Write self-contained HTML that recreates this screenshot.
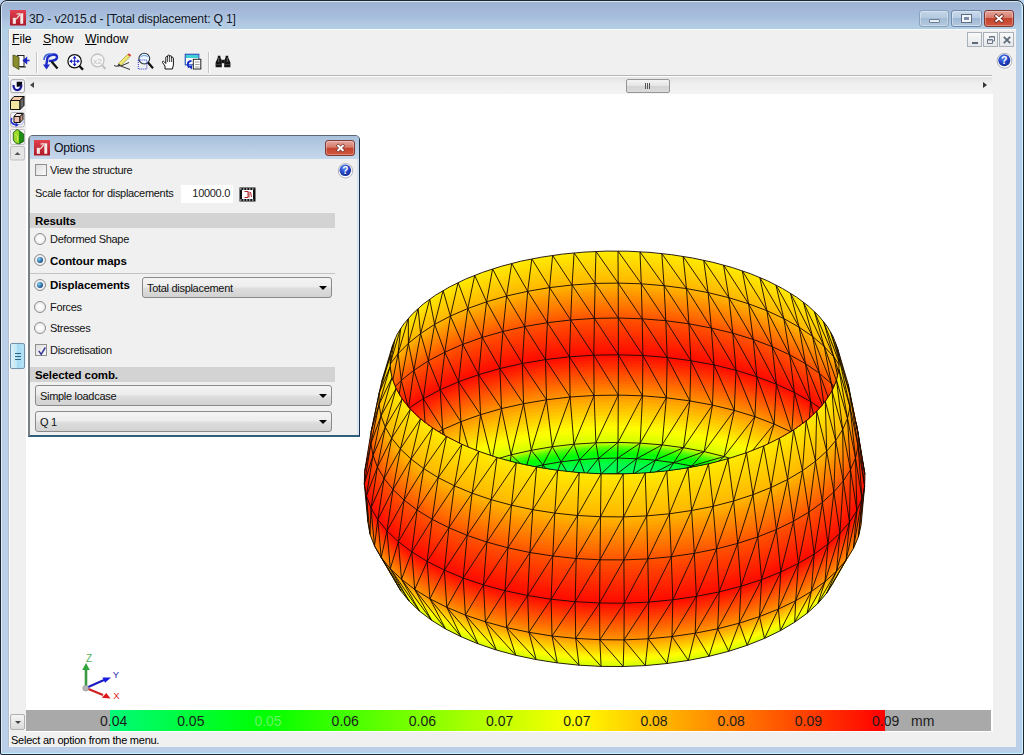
<!DOCTYPE html>
<html><head><meta charset="utf-8"><title>3D - v2015.d</title>
<style>
html,body{margin:0;padding:0;}
body{width:1024px;height:755px;overflow:hidden;position:relative;background:#b9d1ea;font-family:"Liberation Sans",sans-serif;font-size:12px;color:#000;}
.abs{position:absolute;}
#frame{left:0;top:0;width:1022px;height:753px;border:1px solid #1c2630;border-radius:7px 7px 2px 2px;background:linear-gradient(#9cb5d0 2px,#a6b9dc 11px,#a3bdda 15px,#b0c6e2 21px,#b2d0e5 29px,#bbcfe8 60px,#bbcfe8 100%);box-sizing:content-box;box-shadow:inset 0 0 0 1px rgba(235,245,255,.75),inset -2px -2px 0 0 #a9d6f0;}
#client{left:8px;top:29px;width:1008px;height:718px;background:#f0f0f0;}
#title{text-shadow:0 0 5px rgba(255,255,255,.6);left:29px;top:10.5px;letter-spacing:-.2px;font-size:12.2px;color:#101828;white-space:nowrap;line-height:16px;}
.ml{fill:none;stroke:#1a0c00;stroke-width:1;stroke-opacity:.92;}
#canvas{left:26px;top:94px;width:967px;height:638px;background:#fff;}
.menu{top:32px;font-size:12.2px;line-height:15px;white-space:nowrap;}
.menu u{text-decoration-thickness:1px;text-underline-offset:1px;}
#status{left:11px;top:733px;font-size:11px;line-height:14px;white-space:nowrap;letter-spacing:-.25px;}
#cbar{left:26px;top:710px;width:965px;height:21px;background:#a9a9a9;}
#grad{left:110px;top:710px;width:775px;height:21px;background:linear-gradient(90deg,rgb(0,250,120) 0,rgb(0,255,0) 20%,rgb(255,255,0) 60%,rgb(255,0,0) 100%);}
.cl{top:713px;font-size:14px;line-height:16px;color:#1c1c1c;white-space:nowrap;}
.mdi{top:32px;width:13px;height:13px;border:1px solid #a8b0ba;background:linear-gradient(#fafafa,#e4e6ea);box-sizing:content-box;}
/* dialog */
#dlg{left:28px;top:135px;width:329px;height:299px;border:1px solid #5c6a78;border-left:2px solid #788084;border-bottom:2px solid #2f5f7c;border-right:1px solid #1c3048;box-shadow:inset -2px 0 0 #d6e4f2,inset 0 1px 0 #e4eef8;border-radius:5px 5px 0 0;background:#f0f0f0;overflow:hidden;}
#dlgt{left:0;top:0;width:100%;height:23px;background:linear-gradient(#a9c1dc,#c6d8ec);}
.dt{font-size:11px;line-height:14px;white-space:nowrap;letter-spacing:-.3px;color:#111;margin-top:-1px;}
.db{font-weight:bold;font-size:11.5px;line-height:14px;white-space:nowrap;letter-spacing:-.1px;color:#000;margin-top:-.5px;}
.band{left:30px;width:305px;height:15px;background:#d3d3d3;}
.combo{height:19px;border:1px solid #8a8a8a;border-radius:3px;background:linear-gradient(#f4f4f4 0,#ececec 48%,#dedede 52%,#d2d2d2 100%);box-sizing:content-box;}
.combo span{position:absolute;left:4px;top:4px;}
.combo i{position:absolute;right:4px;top:8px;width:0;height:0;border-left:4px solid transparent;border-right:4px solid transparent;border-top:4px solid #000;}
.radio{width:10px;height:10px;border:1px solid #8e8f8f;border-radius:50%;background:radial-gradient(#fdfdfd 30%,#d8d8d8 100%);box-sizing:content-box;}
.radio.on::after{content:"";position:absolute;left:2px;top:2px;width:6px;height:6px;border-radius:50%;background:radial-gradient(circle at 35% 35%,#7fd4f0,#1c4f8f 70%);}
.chk{width:10px;height:10px;border:1px solid #8e8f8f;background:linear-gradient(135deg,#dedede,#fafafa);box-sizing:content-box;}
</style></head><body>
<div id="frame" class="abs"></div>
<div id="title" class="abs">3D - v2015.d - [Total displacement: Q 1]</div>
<div id="client" class="abs"></div>
<div class="abs" style="left:8px;top:29px;width:1008px;height:1px;background:#f9fbfd"></div><div class="abs" style="left:8px;top:29px;width:1px;height:718px;background:#b4bfcd"></div><div class="abs" style="left:9px;top:29px;width:1px;height:718px;background:#fbfbfb"></div>
<div class="abs menu" style="left:12px"><u>F</u>ile</div>
<div class="abs menu" style="left:43px"><u>S</u>how</div>
<div class="abs menu" style="left:85px"><u>W</u>indow</div>
<div class="abs" style="left:8px;top:75px;width:984px;height:1px;background:#b6b6b6"></div>
<div class="abs" style="left:8px;top:76px;width:984px;height:1px;background:#fff"></div>
<div id="canvas" class="abs"></div>
<svg class="abs" style="left:0;top:0" width="1024" height="755" viewBox="0 0 1024 755">
<g>
<ellipse cx="614.6" cy="554.5" rx="226" ry="112.1" fill="#d8ff00"/>
<ellipse cx="614.6" cy="551.9" rx="227.5" ry="112.8" fill="#e2ff00"/>
<ellipse cx="614.6" cy="549.2" rx="229" ry="113.6" fill="#edff00"/>
<ellipse cx="614.6" cy="546.6" rx="230.5" ry="114.3" fill="#f8ff00"/>
<ellipse cx="614.6" cy="543.9" rx="232" ry="115.1" fill="#fffb00"/>
<ellipse cx="614.6" cy="541.3" rx="233.5" ry="115.8" fill="#fff100"/>
<ellipse cx="614.6" cy="538.6" rx="235" ry="116.5" fill="#ffe600"/>
<ellipse cx="614.6" cy="536" rx="236.4" ry="117.3" fill="#ffdb00"/>
<ellipse cx="614.6" cy="533.4" rx="237.9" ry="118" fill="#ffd000"/>
<ellipse cx="614.6" cy="530.7" rx="239.4" ry="118.8" fill="#ffc600"/>
<ellipse cx="614.6" cy="528.1" rx="240.9" ry="119.5" fill="#ffbb00"/>
<ellipse cx="614.6" cy="525.4" rx="242.4" ry="120.2" fill="#ffb000"/>
<ellipse cx="614.6" cy="522.8" rx="243.9" ry="121" fill="#ffa500"/>
<ellipse cx="614.6" cy="520.1" rx="245.4" ry="121.7" fill="#ff9b00"/>
<ellipse cx="614.6" cy="517.5" rx="246.9" ry="122.5" fill="#ff9000"/>
<ellipse cx="614.6" cy="514.8" rx="247.2" ry="122.6" fill="#ff8600"/>
<ellipse cx="614.6" cy="512" rx="247.4" ry="122.7" fill="#ff7c00"/>
<ellipse cx="614.6" cy="509.2" rx="247.7" ry="122.8" fill="#ff7200"/>
<ellipse cx="614.6" cy="506.5" rx="247.9" ry="123" fill="#ff6800"/>
<ellipse cx="614.6" cy="503.8" rx="248.2" ry="123.1" fill="#ff5e00"/>
<ellipse cx="614.6" cy="501" rx="248.4" ry="123.2" fill="#ff5400"/>
<ellipse cx="614.6" cy="498.2" rx="248.7" ry="123.4" fill="#ff4a00"/>
<ellipse cx="614.6" cy="495.5" rx="249" ry="123.5" fill="#ff4000"/>
<ellipse cx="614.6" cy="492.8" rx="249.2" ry="123.6" fill="#ff3600"/>
<ellipse cx="614.6" cy="490" rx="249.5" ry="123.7" fill="#ff2c00"/>
<ellipse cx="614.6" cy="487.2" rx="249.7" ry="123.9" fill="#ff2200"/>
<ellipse cx="614.6" cy="484.5" rx="250" ry="124" fill="#ff1800"/>
<ellipse cx="614.6" cy="481.8" rx="250.2" ry="124.1" fill="#ff0e00"/>
<ellipse cx="614.6" cy="479" rx="250.5" ry="124.2" fill="#ff0c00"/>
<ellipse cx="614.6" cy="476.1" rx="250" ry="124" fill="#ff1100"/>
<ellipse cx="614.6" cy="473.3" rx="249.6" ry="123.8" fill="#ff1600"/>
<ellipse cx="614.6" cy="470.4" rx="249.1" ry="123.5" fill="#ff1b00"/>
<ellipse cx="614.6" cy="467.6" rx="248.6" ry="123.3" fill="#ff2100"/>
<ellipse cx="614.6" cy="464.7" rx="248.1" ry="123.1" fill="#ff2600"/>
<ellipse cx="614.6" cy="461.9" rx="247.7" ry="122.8" fill="#ff2b00"/>
<ellipse cx="614.6" cy="459" rx="247.2" ry="122.6" fill="#ff3100"/>
<ellipse cx="614.6" cy="456.1" rx="246.7" ry="122.4" fill="#ff3600"/>
<ellipse cx="614.6" cy="453.3" rx="246.3" ry="122.1" fill="#ff3b00"/>
<ellipse cx="614.6" cy="450.4" rx="245.8" ry="121.9" fill="#ff4000"/>
<ellipse cx="614.6" cy="447.6" rx="245.3" ry="121.7" fill="#ff4600"/>
<ellipse cx="614.6" cy="444.7" rx="244.8" ry="121.4" fill="#ff4b00"/>
<ellipse cx="614.6" cy="441.9" rx="244.4" ry="121.2" fill="#ff5000"/>
<ellipse cx="614.6" cy="439" rx="243.9" ry="121" fill="#ff5600"/>
<ellipse cx="614.6" cy="436.2" rx="243.3" ry="120.7" fill="#ff5e00"/>
<ellipse cx="614.6" cy="433.4" rx="242.7" ry="120.4" fill="#ff6500"/>
<ellipse cx="614.6" cy="430.6" rx="242.2" ry="120.1" fill="#ff6c00"/>
<ellipse cx="614.6" cy="427.9" rx="241.6" ry="119.8" fill="#ff7300"/>
<ellipse cx="614.6" cy="425.1" rx="241" ry="119.5" fill="#ff7a00"/>
<ellipse cx="614.6" cy="422.3" rx="240.4" ry="119.3" fill="#ff8100"/>
<ellipse cx="614.6" cy="419.5" rx="239.9" ry="119" fill="#ff8800"/>
<ellipse cx="614.6" cy="416.7" rx="239.3" ry="118.7" fill="#ff8f00"/>
<ellipse cx="614.6" cy="413.9" rx="238.7" ry="118.4" fill="#ff9600"/>
<ellipse cx="614.6" cy="411.1" rx="238.1" ry="118.1" fill="#ff9d00"/>
<ellipse cx="614.6" cy="408.4" rx="237.5" ry="117.8" fill="#ffa500"/>
<ellipse cx="614.6" cy="405.6" rx="237" ry="117.5" fill="#ffac00"/>
<ellipse cx="614.6" cy="402.8" rx="236.4" ry="117.2" fill="#ffb300"/>
<ellipse cx="614.6" cy="400" rx="235.8" ry="117" fill="#ffb800"/>
<ellipse cx="614.6" cy="397.3" rx="235" ry="116.6" fill="#ffbc00"/>
<ellipse cx="614.6" cy="394.6" rx="234.2" ry="116.2" fill="#ffc000"/>
<ellipse cx="614.6" cy="392" rx="233.4" ry="115.8" fill="#ffc300"/>
<ellipse cx="614.6" cy="389.3" rx="232.6" ry="115.4" fill="#ffc700"/>
<ellipse cx="614.6" cy="386.6" rx="231.8" ry="115" fill="#ffcb00"/>
<ellipse cx="614.6" cy="383.9" rx="231" ry="114.6" fill="#ffcf00"/>
<ellipse cx="614.6" cy="381.2" rx="230.2" ry="114.2" fill="#ffd200"/>
<ellipse cx="614.6" cy="378.6" rx="229.5" ry="113.8" fill="#ffd600"/>
<ellipse cx="614.6" cy="375.9" rx="228.7" ry="113.4" fill="#ffda00"/>
<ellipse cx="614.6" cy="373.2" rx="227.9" ry="113" fill="#ffde00"/>
<ellipse cx="614.6" cy="370.5" rx="227.1" ry="112.6" fill="#ffe100"/>
<ellipse cx="614.6" cy="367.9" rx="226.3" ry="112.2" fill="#ffe500"/>
<ellipse cx="614.6" cy="365.2" rx="225.5" ry="111.8" fill="#ffe900"/>
</g>
<clipPath id="rim"><ellipse cx="614.6" cy="362.5" rx="224.7" ry="111.5"/></clipPath>
<g clip-path="url(#rim)">
<ellipse cx="614.6" cy="362.5" rx="224.7" ry="111.5" fill="#ffe900"/>
<ellipse cx="614.6" cy="365.2" rx="225.5" ry="111.8" fill="#ffe500"/>
<ellipse cx="614.6" cy="367.9" rx="226.3" ry="112.2" fill="#ffe100"/>
<ellipse cx="614.6" cy="370.5" rx="227.1" ry="112.6" fill="#ffde00"/>
<ellipse cx="614.6" cy="373.2" rx="227.9" ry="113" fill="#ffda00"/>
<ellipse cx="614.6" cy="375.9" rx="228.7" ry="113.4" fill="#ffd600"/>
<ellipse cx="614.6" cy="378.6" rx="229.5" ry="113.8" fill="#ffd200"/>
<ellipse cx="614.6" cy="381.2" rx="230.2" ry="114.2" fill="#ffcf00"/>
<ellipse cx="614.6" cy="383.9" rx="231" ry="114.6" fill="#ffcb00"/>
<ellipse cx="614.6" cy="386.6" rx="231.8" ry="115" fill="#ffc700"/>
<ellipse cx="614.6" cy="389.3" rx="232.6" ry="115.4" fill="#ffc300"/>
<ellipse cx="614.6" cy="392" rx="233.4" ry="115.8" fill="#ffc000"/>
<ellipse cx="614.6" cy="394.6" rx="234.2" ry="116.2" fill="#ffbc00"/>
<ellipse cx="614.6" cy="397.3" rx="235" ry="116.6" fill="#ffb800"/>
<ellipse cx="614.6" cy="400" rx="235.8" ry="117" fill="#ffb300"/>
<ellipse cx="614.6" cy="402.8" rx="236.4" ry="117.2" fill="#ffac00"/>
<ellipse cx="614.6" cy="405.6" rx="237" ry="117.5" fill="#ffa500"/>
<ellipse cx="614.6" cy="408.4" rx="237.5" ry="117.8" fill="#ff9d00"/>
<ellipse cx="614.6" cy="411.1" rx="238.1" ry="118.1" fill="#ff9600"/>
<ellipse cx="614.6" cy="413.9" rx="238.7" ry="118.4" fill="#ff8f00"/>
<ellipse cx="614.6" cy="416.7" rx="239.3" ry="118.7" fill="#ff8800"/>
<ellipse cx="614.6" cy="419.5" rx="239.9" ry="119" fill="#ff8100"/>
<ellipse cx="614.6" cy="422.3" rx="240.4" ry="119.3" fill="#ff7a00"/>
<ellipse cx="614.6" cy="425.1" rx="241" ry="119.5" fill="#ff7300"/>
<ellipse cx="614.6" cy="427.9" rx="241.6" ry="119.8" fill="#ff6c00"/>
<ellipse cx="614.6" cy="430.6" rx="242.2" ry="120.1" fill="#ff6500"/>
<ellipse cx="614.6" cy="433.4" rx="242.7" ry="120.4" fill="#ff5e00"/>
<ellipse cx="614.6" cy="436.2" rx="243.3" ry="120.7" fill="#ff5600"/>
<ellipse cx="614.6" cy="439" rx="243.9" ry="121" fill="#ff5000"/>
<ellipse cx="614.6" cy="441.9" rx="244.4" ry="121.2" fill="#ff4b00"/>
<ellipse cx="614.6" cy="444.7" rx="244.8" ry="121.4" fill="#ff4600"/>
<ellipse cx="614.6" cy="447.6" rx="245.3" ry="121.7" fill="#ff4000"/>
<ellipse cx="614.6" cy="450.4" rx="245.8" ry="121.9" fill="#ff3b00"/>
<ellipse cx="614.6" cy="453.3" rx="246.3" ry="122.1" fill="#ff3600"/>
<ellipse cx="614.6" cy="456.1" rx="246.7" ry="122.4" fill="#ff3100"/>
<ellipse cx="614.6" cy="459" rx="247.2" ry="122.6" fill="#ff2b00"/>
<ellipse cx="614.6" cy="461.9" rx="247.7" ry="122.8" fill="#ff2600"/>
<ellipse cx="614.6" cy="464.7" rx="248.1" ry="123.1" fill="#ff2100"/>
<ellipse cx="614.6" cy="467.6" rx="248.6" ry="123.3" fill="#ff1b00"/>
<ellipse cx="614.6" cy="470.4" rx="249.1" ry="123.5" fill="#ff1600"/>
<ellipse cx="614.6" cy="473.3" rx="249.6" ry="123.8" fill="#ff1100"/>
<ellipse cx="614.6" cy="476.1" rx="250" ry="124" fill="#ff0c00"/>
<ellipse cx="614.6" cy="479" rx="250.5" ry="124.2" fill="#ff0e00"/>
<ellipse cx="614.6" cy="481.8" rx="250.2" ry="124.1" fill="#ff1800"/>
<ellipse cx="614.6" cy="484.5" rx="250" ry="124" fill="#ff2200"/>
<ellipse cx="614.6" cy="487.2" rx="249.7" ry="123.9" fill="#ff2c00"/>
<ellipse cx="614.6" cy="490" rx="249.5" ry="123.7" fill="#ff3600"/>
<ellipse cx="614.6" cy="492.8" rx="249.2" ry="123.6" fill="#ff4000"/>
<ellipse cx="614.6" cy="495.5" rx="249" ry="123.5" fill="#ff4a00"/>
<ellipse cx="614.6" cy="498.2" rx="248.7" ry="123.4" fill="#ff5400"/>
<ellipse cx="614.6" cy="501" rx="248.4" ry="123.2" fill="#ff5e00"/>
<ellipse cx="614.6" cy="503.8" rx="248.2" ry="123.1" fill="#ff6800"/>
<ellipse cx="614.6" cy="506.5" rx="247.9" ry="123" fill="#ff7200"/>
<ellipse cx="614.6" cy="509.2" rx="247.7" ry="122.8" fill="#ff7c00"/>
<ellipse cx="614.6" cy="512" rx="247.4" ry="122.7" fill="#ff8600"/>
<ellipse cx="614.6" cy="514.8" rx="247.2" ry="122.6" fill="#ff9000"/>
<ellipse cx="614.6" cy="517.5" rx="246.9" ry="122.5" fill="#ff9b00"/>
<ellipse cx="614.6" cy="520.1" rx="245.4" ry="121.7" fill="#ffa500"/>
<ellipse cx="614.6" cy="522.8" rx="243.9" ry="121" fill="#ffb000"/>
<ellipse cx="614.6" cy="525.4" rx="242.4" ry="120.2" fill="#ffbb00"/>
<ellipse cx="614.6" cy="528.1" rx="240.9" ry="119.5" fill="#ffc600"/>
<ellipse cx="614.6" cy="530.7" rx="239.4" ry="118.8" fill="#ffd000"/>
<ellipse cx="614.6" cy="533.4" rx="237.9" ry="118" fill="#ffdb00"/>
<ellipse cx="614.6" cy="536" rx="236.4" ry="117.3" fill="#ffe600"/>
<ellipse cx="614.6" cy="538.6" rx="235" ry="116.5" fill="#fff100"/>
<ellipse cx="614.6" cy="541.3" rx="233.5" ry="115.8" fill="#fffb00"/>
<ellipse cx="614.6" cy="543.9" rx="232" ry="115.1" fill="#f8ff00"/>
<ellipse cx="614.6" cy="546.6" rx="230.5" ry="114.3" fill="#edff00"/>
<ellipse cx="614.6" cy="549.2" rx="229" ry="113.6" fill="#e2ff00"/>
<ellipse cx="614.6" cy="551.9" rx="227.5" ry="112.8" fill="#d8ff00"/>
<ellipse cx="614.6" cy="554.5" rx="226" ry="112.1" fill="#c7ff00"/>
<ellipse cx="614.6" cy="554.5" rx="224.1" ry="111.2" fill="#b1ff00"/>
<ellipse cx="614.6" cy="554.5" rx="222.2" ry="110.2" fill="#9bff00"/>
<ellipse cx="614.6" cy="554.5" rx="220.3" ry="109.3" fill="#84ff00"/>
<ellipse cx="614.6" cy="554.5" rx="218.5" ry="108.4" fill="#6eff00"/>
<ellipse cx="614.6" cy="554.5" rx="216.6" ry="107.4" fill="#58ff00"/>
<ellipse cx="614.6" cy="554.5" rx="214.7" ry="106.5" fill="#46ff00"/>
<ellipse cx="614.6" cy="554.5" rx="212.8" ry="105.6" fill="#39ff00"/>
<ellipse cx="614.6" cy="554.5" rx="210.9" ry="104.6" fill="#2dff00"/>
<ellipse cx="614.6" cy="554.5" rx="209.1" ry="103.7" fill="#20ff00"/>
<ellipse cx="614.6" cy="554.5" rx="207.2" ry="102.8" fill="#13ff00"/>
<ellipse cx="614.6" cy="554.5" rx="205.3" ry="101.8" fill="#06ff00"/>
<ellipse cx="614.6" cy="554.5" rx="203.4" ry="100.9" fill="#00ff07"/>
<ellipse cx="614.6" cy="554.5" rx="199.6" ry="99" fill="#00fe14"/>
<ellipse cx="614.6" cy="554.5" rx="195.9" ry="97.1" fill="#00fe20"/>
<ellipse cx="614.6" cy="554.5" rx="192.1" ry="95.3" fill="#00fd2e"/>
<ellipse cx="614.6" cy="554.5" rx="188.3" ry="93.4" fill="#00fd3b"/>
<ellipse cx="614.6" cy="554.5" rx="184.6" ry="91.5" fill="#00fc48"/>
<ellipse cx="614.6" cy="554.5" rx="180.8" ry="89.7" fill="#00fc51"/>
<ellipse cx="614.6" cy="554.5" rx="169.5" ry="84.1" fill="#00fb56"/>
<ellipse cx="614.6" cy="554.5" rx="158.2" ry="78.5" fill="#00fb5a"/>
<ellipse cx="614.6" cy="554.5" rx="146.9" ry="72.9" fill="#00fb60"/>
<ellipse cx="614.6" cy="554.5" rx="135.6" ry="67.3" fill="#00fb64"/>
<ellipse cx="614.6" cy="554.5" rx="124.3" ry="61.7" fill="#00fb6a"/>
<ellipse cx="614.6" cy="554.5" rx="113" ry="56" fill="#00fa6d"/>
<ellipse cx="614.6" cy="554.5" rx="94.2" ry="46.7" fill="#00fa6f"/>
<ellipse cx="614.6" cy="554.5" rx="75.3" ry="37.4" fill="#00fa71"/>
<ellipse cx="614.6" cy="554.5" rx="56.5" ry="28" fill="#00fa73"/>
<ellipse cx="614.6" cy="554.5" rx="37.7" ry="18.7" fill="#00fa75"/>
<ellipse cx="614.6" cy="554.5" rx="18.8" ry="9.3" fill="#00fa77"/>
<path class="ml" d="M835.6 578L804.6 574.7M835.6 578L807.7 565.4M804.6 574.7L773.7 571.4M804.6 574.7L776.3 563.6M804.6 574.7L807.7 565.4M773.7 571.4L776.3 563.6M839.1 567.2L807.7 565.4M839.1 567.2L808.9 556M807.7 565.4L776.3 563.6M807.7 565.4L777.3 555.7M807.7 565.4L808.9 556M776.3 563.6L777.3 555.7M840.6 556.2L808.9 556M840.6 556.2L808.3 546.5M808.9 556L777.3 555.7M808.9 556L776.8 547.8M808.9 556L808.3 546.5M777.3 555.7L776.8 547.8M839.8 545.2L808.3 546.5M839.8 545.2L805.8 537.1M808.3 546.5L776.8 547.8M808.3 546.5L774.7 540M808.3 546.5L805.8 537.1M776.8 547.8L774.7 540M836.9 534.3L805.8 537.1M836.9 534.3L801.4 527.9M805.8 537.1L774.7 540M805.8 537.1L771 532.2M805.8 537.1L801.4 527.9M774.7 540L771 532.2M831.8 523.6L801.4 527.9M831.8 523.6L795.3 519M801.4 527.9L771 532.2M801.4 527.9L765.9 524.7M801.4 527.9L795.3 519M771 532.2L765.9 524.7M824.7 513.2L795.3 519M824.7 513.2L787.4 510.4M795.3 519L765.9 524.7M795.3 519L759.3 517.5M795.3 519L787.4 510.4M765.9 524.7L759.3 517.5M815.5 503.2L787.4 510.4M815.5 503.2L777.8 502.2M787.4 510.4L759.3 517.5M787.4 510.4L751.3 510.7M787.4 510.4L777.8 502.2M759.3 517.5L751.3 510.7M804.4 493.6L777.8 502.2M804.4 493.6L766.7 494.5M777.8 502.2L751.3 510.7M777.8 502.2L741.9 504.3M777.8 502.2L766.7 494.5M751.3 510.7L741.9 504.3M791.5 484.7L766.7 494.5M791.5 484.7L754.1 487.4M766.7 494.5L741.9 504.3M766.7 494.5L731.4 498.3M766.7 494.5L754.1 487.4M741.9 504.3L731.4 498.3M776.8 476.4L754.1 487.4M776.8 476.4L740.2 480.9M754.1 487.4L731.4 498.3M754.1 487.4L719.7 492.9M754.1 487.4L740.2 480.9M731.4 498.3L719.7 492.9M760.6 468.9L740.2 480.9M760.6 468.9L725 475.2M740.2 480.9L719.7 492.9M740.2 480.9L707 488.1M740.2 480.9L725 475.2M719.7 492.9L707 488.1M743 462.3L725 475.2M743 462.3L708.8 470.2M725 475.2L707 488.1M725 475.2L693.5 483.9M725 475.2L708.8 470.2M707 488.1L693.5 483.9M724.1 456.5L708.8 470.2M724.1 456.5L691.7 466M708.8 470.2L693.5 483.9M708.8 470.2L679.1 480.4M708.8 470.2L691.7 466M693.5 483.9L679.1 480.4M704.2 451.6L691.7 466M704.2 451.6L673.8 462.7M691.7 466L679.1 480.4M691.7 466L664.2 477.6M691.7 466L673.8 462.7M679.1 480.4L664.2 477.6M683.5 447.7L673.8 462.7M683.5 447.7L655.4 460.2M673.8 462.7L664.2 477.6M673.8 462.7L648.8 475.6M673.8 462.7L655.4 460.2M664.2 477.6L648.8 475.6M662.1 444.9L655.4 460.2M662.1 444.9L636.6 458.7M655.4 460.2L648.8 475.6M655.4 460.2L633 474.3M655.4 460.2L636.6 458.7M648.8 475.6L633 474.3M640.2 443.1L636.6 458.7M640.2 443.1L617.6 458.1M636.6 458.7L633 474.3M636.6 458.7L617.1 473.8M636.6 458.7L617.6 458.1M633 474.3L617.1 473.8M618 442.4L617.6 458.1M618 442.4L598.5 458.4M617.6 458.1L617.1 473.8M617.6 458.1L601.1 474.1M617.6 458.1L598.5 458.4M617.1 473.8L601.1 474.1M595.9 442.8L598.5 458.4M595.9 442.8L579.6 459.7M598.5 458.4L601.1 474.1M598.5 458.4L585.3 475.1M598.5 458.4L579.6 459.7M601.1 474.1L585.3 475.1M573.9 444.2L579.6 459.7M573.9 444.2L561 461.8M579.6 459.7L585.3 475.1M579.6 459.7L569.7 476.9M579.6 459.7L561 461.8M585.3 475.1L569.7 476.9M552.3 446.7L561 461.8M552.3 446.7L543 464.9M561 461.8L569.7 476.9M561 461.8L554.6 479.5M561 461.8L543 464.9M569.7 476.9L554.6 479.5M531.3 450.3L543 464.9M531.3 450.3L525.6 468.8M543 464.9L554.6 479.5M543 464.9L540.1 482.8M543 464.9L525.6 468.8M554.6 479.5L540.1 482.8M511.1 454.8L525.6 468.8M511.1 454.8L509.1 473.5M525.6 468.8L540.1 482.8M525.6 468.8L526.3 486.7M525.6 468.8L509.1 473.5M540.1 482.8L526.3 486.7M491.9 460.4L509.1 473.5M491.9 460.4L493.6 479.1M509.1 473.5L526.3 486.7M509.1 473.5L513.3 491.3M509.1 473.5L493.6 479.1M526.3 486.7L513.3 491.3M473.9 466.8L493.6 479.1M473.9 466.8L479.3 485.3M493.6 479.1L513.3 491.3M493.6 479.1L501.3 496.6M493.6 479.1L479.3 485.3M513.3 491.3L501.3 496.6M457.2 474L479.3 485.3M457.2 474L466.2 492.2M479.3 485.3L501.3 496.6M479.3 485.3L490.4 502.4M479.3 485.3L466.2 492.2M501.3 496.6L490.4 502.4M442.1 482.1L466.2 492.2M442.1 482.1L454.7 499.7M466.2 492.2L490.4 502.4M466.2 492.2L480.7 508.6M466.2 492.2L454.7 499.7M490.4 502.4L480.7 508.6M428.6 490.8L454.7 499.7M428.6 490.8L444.6 507.8M454.7 499.7L480.7 508.6M454.7 499.7L472.3 515.4M454.7 499.7L444.6 507.8M480.7 508.6L472.3 515.4M416.9 500.2L444.6 507.8M416.9 500.2L436.2 516.3M444.6 507.8L472.3 515.4M444.6 507.8L465.2 522.5M444.6 507.8L436.2 516.3M472.3 515.4L465.2 522.5M407.1 510L436.2 516.3M407.1 510L429.5 525.1M436.2 516.3L465.2 522.5M436.2 516.3L459.6 529.9M436.2 516.3L429.5 525.1M465.2 522.5L459.6 529.9M399.4 520.3L429.5 525.1M399.4 520.3L424.6 534.3M429.5 525.1L459.6 529.9M429.5 525.1L455.5 537.6M429.5 525.1L424.6 534.3M459.6 529.9L455.5 537.6M393.6 531L424.6 534.3M393.6 531L421.5 543.6M424.6 534.3L455.5 537.6M424.6 534.3L452.9 545.4M424.6 534.3L421.5 543.6M455.5 537.6L452.9 545.4M390.1 541.8L421.5 543.6M390.1 541.8L420.3 553M421.5 543.6L452.9 545.4M421.5 543.6L451.9 553.3M421.5 543.6L420.3 553M452.9 545.4L451.9 553.3M388.6 552.8L420.3 553M388.6 552.8L420.9 562.5M420.3 553L451.9 553.3M420.3 553L452.4 561.2M420.3 553L420.9 562.5M451.9 553.3L452.4 561.2M389.4 563.8L420.9 562.5M389.4 563.8L423.4 571.9M420.9 562.5L452.4 561.2M420.9 562.5L454.5 569M420.9 562.5L423.4 571.9M452.4 561.2L454.5 569M849.8 554.8L835.6 578M829.8 588.7L835.6 578M856 543.2L835.6 578M856 543.2L839.1 567.2M835.6 578L839.1 567.2M859.9 531.4L865.1 480.9M859.9 531.4L861.5 519.4M859.9 531.4L839.1 567.2M859.9 531.4L840.6 556.2M839.1 567.2L840.6 556.2M865.1 480.9L861.5 519.4M861.5 519.4L864.2 468.7M861.5 519.4L860.7 507.3M861.5 519.4L840.6 556.2M861.5 519.4L839.8 545.2M840.6 556.2L839.8 545.2M849.6 390.3L835.6 342.4M849.6 390.3L846.5 378.9M857.7 429L846.5 378.9M857.7 429L854.5 417.2M857.7 429L864.2 468.7M864.2 468.7L854.5 417.2M864.2 468.7L861 456.6M864.2 468.7L860.7 507.3M860.7 507.3L861 456.6M860.7 507.3L857.5 495.4M860.7 507.3L839.8 545.2M860.7 507.3L836.9 534.3M839.8 545.2L836.9 534.3M835.6 342.4L846.5 378.9M846.5 378.9L830.6 331.8M846.5 378.9L841.3 367.8M846.5 378.9L854.5 417.2M854.5 417.2L841.3 367.8M854.5 417.2L849 405.6M854.5 417.2L861 456.6M861 456.6L849 405.6M861 456.6L855.4 444.7M861 456.6L857.5 495.4M857.5 495.4L855.4 444.7M857.5 495.4L851.9 483.7M857.5 495.4L836.9 534.3M857.5 495.4L831.8 523.6M836.9 534.3L831.8 523.6M830.6 331.8L841.3 367.8M841.3 367.8L823.5 321.4M841.3 367.8L833.8 356.9M841.3 367.8L849 405.6M849 405.6L833.8 356.9M849 405.6L841.3 394.4M849 405.6L855.4 444.7M855.4 444.7L841.3 394.4M855.4 444.7L847.5 433.2M855.4 444.7L851.9 483.7M851.9 483.7L847.5 433.2M851.9 483.7L844.1 472.4M851.9 483.7L831.8 523.6M851.9 483.7L824.7 513.2M831.8 523.6L824.7 513.2M823.5 321.4L833.8 356.9M833.8 356.9L814.4 311.5M833.8 356.9L824.2 346.4M833.8 356.9L841.3 394.4M841.3 394.4L824.2 346.4M841.3 394.4L831.4 383.6M841.3 394.4L847.5 433.2M847.5 433.2L831.4 383.6M847.5 433.2L837.3 422.1M847.5 433.2L844.1 472.4M844.1 472.4L837.3 422.1M844.1 472.4L834.1 461.4M844.1 472.4L824.7 513.2M844.1 472.4L815.5 503.2M824.7 513.2L815.5 503.2M814.4 311.5L824.2 346.4M824.2 346.4L803.3 302M824.2 346.4L812.6 336.5M824.2 346.4L831.4 383.6M831.4 383.6L812.6 336.5M831.4 383.6L819.4 373.3M831.4 383.6L837.3 422.1M837.3 422.1L819.4 373.3M837.3 422.1L825 411.5M837.3 422.1L834.1 461.4M834.1 461.4L825 411.5M834.1 461.4L821.9 451M834.1 461.4L815.5 503.2M834.1 461.4L804.4 493.6M815.5 503.2L804.4 493.6M803.3 302L812.6 336.5M812.6 336.5L790.4 293.1M812.6 336.5L799.1 327.2M812.6 336.5L819.4 373.3M819.4 373.3L799.1 327.2M819.4 373.3L805.5 363.7M819.4 373.3L825 411.5M825 411.5L805.5 363.7M825 411.5L810.6 401.6M825 411.5L821.9 451M821.9 451L810.6 401.6M821.9 451L807.8 441.3M821.9 451L804.4 493.6M821.9 451L791.5 484.7M804.4 493.6L791.5 484.7M790.4 293.1L799.1 327.2M799.1 327.2L775.9 284.9M799.1 327.2L783.8 318.6M799.1 327.2L805.5 363.7M805.5 363.7L783.8 318.6M805.5 363.7L789.7 354.8M805.5 363.7L810.6 401.6M810.6 401.6L789.7 354.8M810.6 401.6L794.4 392.5M810.6 401.6L807.8 441.3M807.8 441.3L794.4 392.5M807.8 441.3L791.8 432.2M807.8 441.3L791.5 484.7M807.8 441.3L776.8 476.4M791.5 484.7L776.8 476.4M775.9 284.9L783.8 318.6M783.8 318.6L759.8 277.4M783.8 318.6L766.9 310.7M783.8 318.6L789.7 354.8M789.7 354.8L766.9 310.7M789.7 354.8L772.2 346.7M789.7 354.8L794.4 392.5M794.4 392.5L772.2 346.7M794.4 392.5L776.4 384.2M794.4 392.5L791.8 432.2M791.8 432.2L776.4 384.2M791.8 432.2L774.1 424M791.8 432.2L776.8 476.4M791.8 432.2L760.6 468.9M776.8 476.4L760.6 468.9M759.8 277.4L766.9 310.7M766.9 310.7L742.3 270.8M766.9 310.7L748.6 303.8M766.9 310.7L772.2 346.7M772.2 346.7L748.6 303.8M772.2 346.7L753.2 339.4M772.2 346.7L776.4 384.2M776.4 384.2L753.2 339.4M776.4 384.2L756.9 376.8M776.4 384.2L774.1 424M774.1 424L756.9 376.8M774.1 424L754.9 416.7M774.1 424L760.6 468.9M774.1 424L743 462.3M760.6 468.9L743 462.3M742.3 270.8L748.6 303.8M748.6 303.8L723.5 265M748.6 303.8L728.9 297.7M748.6 303.8L753.2 339.4M753.2 339.4L728.9 297.7M753.2 339.4L732.8 333.2M753.2 339.4L756.9 376.8M756.9 376.8L732.8 333.2M756.9 376.8L736 370.3M756.9 376.8L754.9 416.7M754.9 416.7L736 370.3M754.9 416.7L734.3 410.4M754.9 416.7L743 462.3M754.9 416.7L724.1 456.5M743 462.3L724.1 456.5M723.5 265L728.9 297.7M728.9 297.7L703.7 260.2M728.9 297.7L708.1 292.6M728.9 297.7L732.8 333.2M732.8 333.2L708.1 292.6M732.8 333.2L711.3 328M732.8 333.2L736 370.3M736 370.3L711.3 328M736 370.3L714 364.9M736 370.3L734.3 410.4M734.3 410.4L714 364.9M734.3 410.4L712.5 405.1M734.3 410.4L724.1 456.5M734.3 410.4L704.2 451.6M724.1 456.5L704.2 451.6M703.7 260.2L708.1 292.6M708.1 292.6L683.1 256.4M708.1 292.6L686.5 288.6M708.1 292.6L711.3 328M711.3 328L686.5 288.6M711.3 328L688.9 323.8M711.3 328L714 364.9M714 364.9L688.9 323.8M714 364.9L690.9 360.7M714 364.9L712.5 405.1M712.5 405.1L690.9 360.7M712.5 405.1L689.9 400.9M712.5 405.1L704.2 451.6M712.5 405.1L683.5 447.7M704.2 451.6L683.5 447.7M683.1 256.4L686.5 288.6M686.5 288.6L661.8 253.5M686.5 288.6L664.1 285.7M686.5 288.6L688.9 323.8M688.9 323.8L664.1 285.7M688.9 323.8L665.8 320.7M688.9 323.8L690.9 360.7M690.9 360.7L665.8 320.7M690.9 360.7L667.2 357.5M690.9 360.7L689.9 400.9M689.9 400.9L667.2 357.5M689.9 400.9L666.4 397.8M689.9 400.9L683.5 447.7M689.9 400.9L662.1 444.9M683.5 447.7L662.1 444.9M661.8 253.5L664.1 285.7M664.1 285.7L640 251.8M664.1 285.7L641.3 283.8M664.1 285.7L665.8 320.7M665.8 320.7L641.3 283.8M665.8 320.7L642.2 318.8M665.8 320.7L667.2 357.5M667.2 357.5L642.2 318.8M667.2 357.5L642.9 355.5M667.2 357.5L666.4 397.8M666.4 397.8L642.9 355.5M666.4 397.8L642.5 395.8M666.4 397.8L662.1 444.9M666.4 397.8L640.2 443.1M662.1 444.9L640.2 443.1M640 251.8L641.3 283.8M641.3 283.8L618 251.1M641.3 283.8L618.2 283.1M641.3 283.8L642.2 318.8M642.2 318.8L618.2 283.1M642.2 318.8L618.3 318M642.2 318.8L642.9 355.5M642.9 355.5L618.3 318M642.9 355.5L618.4 354.8M642.9 355.5L642.5 395.8M642.5 395.8L618.4 354.8M642.5 395.8L618.3 395.1M642.5 395.8L640.2 443.1M642.5 395.8L618 442.4M640.2 443.1L618 442.4M618 251.1L618.2 283.1M618.2 283.1L596 251.4M618.2 283.1L595.1 283.4M618.2 283.1L618.3 318M618.3 318L595.1 283.4M618.3 318L594.4 318.4M618.3 318L618.4 354.8M618.4 354.8L594.4 318.4M618.4 354.8L593.8 355.2M618.4 354.8L618.3 395.1M618.3 395.1L593.8 355.2M618.3 395.1L594.1 395.5M618.3 395.1L618 442.4M618.3 395.1L595.9 442.8M618 442.4L595.9 442.8M596 251.4L595.1 283.4M595.1 283.4L574.1 252.9M595.1 283.4L572.1 285M595.1 283.4L594.4 318.4M594.4 318.4L572.1 285M594.4 318.4L570.7 320M594.4 318.4L593.8 355.2M593.8 355.2L570.7 320M593.8 355.2L569.5 356.8M593.8 355.2L594.1 395.5M594.1 395.5L569.5 356.8M594.1 395.5L570.1 397M594.1 395.5L595.9 442.8M594.1 395.5L573.9 444.2M595.9 442.8L573.9 444.2M574.1 252.9L572.1 285M572.1 285L552.6 255.4M572.1 285L549.6 287.6M572.1 285L570.7 320M570.7 320L549.6 287.6M570.7 320L547.4 322.7M570.7 320L569.5 356.8M569.5 356.8L547.4 322.7M569.5 356.8L545.5 359.6M569.5 356.8L570.1 397M570.1 397L545.5 359.6M570.1 397L546.5 399.8M570.1 397L573.9 444.2M570.1 397L552.3 446.7M573.9 444.2L552.3 446.7M552.6 255.4L549.6 287.6M549.6 287.6L531.8 258.9M549.6 287.6L527.7 291.3M549.6 287.6L547.4 322.7M547.4 322.7L527.7 291.3M547.4 322.7L524.7 326.5M547.4 322.7L545.5 359.6M545.5 359.6L524.7 326.5M545.5 359.6L522.3 363.5M545.5 359.6L546.5 399.8M546.5 399.8L522.3 363.5M546.5 399.8L523.6 403.7M546.5 399.8L552.3 446.7M546.5 399.8L531.3 450.3M552.3 446.7L531.3 450.3M531.8 258.9L527.7 291.3M527.7 291.3L511.7 263.4M527.7 291.3L506.6 296M527.7 291.3L524.7 326.5M524.7 326.5L506.6 296M524.7 326.5L502.9 331.5M524.7 326.5L522.3 363.5M522.3 363.5L502.9 331.5M522.3 363.5L499.9 368.5M522.3 363.5L523.6 403.7M523.6 403.7L499.9 368.5M523.6 403.7L501.5 408.6M523.6 403.7L531.3 450.3M523.6 403.7L511.1 454.8M531.3 450.3L511.1 454.8M511.7 263.4L506.6 296M506.6 296L492.6 268.9M506.6 296L486.6 301.8M506.6 296L502.9 331.5M502.9 331.5L486.6 301.8M502.9 331.5L482.2 337.4M502.9 331.5L499.9 368.5M499.9 368.5L482.2 337.4M499.9 368.5L478.6 374.7M499.9 368.5L501.5 408.6M501.5 408.6L478.6 374.7M501.5 408.6L480.6 414.7M501.5 408.6L511.1 454.8M501.5 408.6L491.9 460.4M511.1 454.8L491.9 460.4M492.6 268.9L486.6 301.8M486.6 301.8L474.7 275.3M486.6 301.8L467.8 308.5M486.6 301.8L482.2 337.4M482.2 337.4L467.8 308.5M482.2 337.4L462.8 344.3M482.2 337.4L478.6 374.7M478.6 374.7L462.8 344.3M478.6 374.7L458.6 381.8M478.6 374.7L480.6 414.7M480.6 414.7L458.6 381.8M480.6 414.7L460.9 421.7M480.6 414.7L491.9 460.4M480.6 414.7L473.9 466.8M491.9 460.4L473.9 466.8M474.7 275.3L467.8 308.5M467.8 308.5L458.1 282.5M467.8 308.5L450.4 316.1M467.8 308.5L462.8 344.3M462.8 344.3L450.4 316.1M462.8 344.3L444.8 352.2M462.8 344.3L458.6 381.8M458.6 381.8L444.8 352.2M458.6 381.8L440.2 389.8M458.6 381.8L460.9 421.7M460.9 421.7L440.2 389.8M460.9 421.7L442.7 429.6M460.9 421.7L473.9 466.8M460.9 421.7L457.2 474M473.9 466.8L457.2 474M458.1 282.5L450.4 316.1M450.4 316.1L443.1 290.5M450.4 316.1L434.6 324.4M450.4 316.1L444.8 352.2M444.8 352.2L434.6 324.4M444.8 352.2L428.4 360.8M444.8 352.2L440.2 389.8M440.2 389.8L428.4 360.8M440.2 389.8L423.4 398.7M440.2 389.8L442.7 429.6M442.7 429.6L423.4 398.7M442.7 429.6L426.1 438.4M442.7 429.6L457.2 474M442.7 429.6L442.1 482.1M457.2 474L442.1 482.1M443.1 290.5L434.6 324.4M434.6 324.4L429.7 299.2M434.6 324.4L420.6 333.6M434.6 324.4L428.4 360.8M428.4 360.8L420.6 333.6M428.4 360.8L413.9 370.3M428.4 360.8L423.4 398.7M423.4 398.7L413.9 370.3M423.4 398.7L408.5 408.4M423.4 398.7L426.1 438.4M426.1 438.4L408.5 408.4M426.1 438.4L411.4 447.9M426.1 438.4L442.1 482.1M426.1 438.4L428.6 490.8M442.1 482.1L428.6 490.8M429.7 299.2L420.6 333.6M420.6 333.6L418.1 308.5M420.6 333.6L408.4 343.3M420.6 333.6L413.9 370.3M413.9 370.3L408.4 343.3M413.9 370.3L401.3 380.4M413.9 370.3L408.5 408.4M408.5 408.4L401.3 380.4M408.5 408.4L395.5 418.8M408.5 408.4L411.4 447.9M411.4 447.9L395.5 418.8M411.4 447.9L398.6 458.1M411.4 447.9L428.6 490.8M411.4 447.9L416.9 500.2M428.6 490.8L416.9 500.2M418.1 308.5L408.4 343.3M408.4 343.3L408.3 318.3M408.4 343.3L398.1 353.6M408.4 343.3L401.3 380.4M401.3 380.4L398.1 353.6M401.3 380.4L390.7 391M401.3 380.4L395.5 418.8M395.5 418.8L390.7 391M395.5 418.8L384.7 429.7M395.5 418.8L398.6 458.1M398.6 458.1L384.7 429.7M398.6 458.1L388 468.9M398.6 458.1L416.9 500.2M398.6 458.1L407.1 510M416.9 500.2L407.1 510M408.3 318.3L398.1 353.6M398.1 353.6L400.6 328.5M398.1 353.6L390 364.4M398.1 353.6L390.7 391M390.7 391L390 364.4M390.7 391L382.3 402.1M390.7 391L384.7 429.7M384.7 429.7L382.3 402.1M384.7 429.7L376 441.1M384.7 429.7L388 468.9M388 468.9L376 441.1M388 468.9L379.4 480.2M388 468.9L407.1 510M388 468.9L399.4 520.3M407.1 510L399.4 520.3M400.6 328.5L390 364.4M390 364.4L394.9 339.1M390 364.4L384.1 375.4M390 364.4L382.3 402.1M382.3 402.1L384.1 375.4M382.3 402.1L376.1 413.6M382.3 402.1L376 441.1M376 441.1L376.1 413.6M376 441.1L369.7 452.9M376 441.1L379.4 480.2M379.4 480.2L369.7 452.9M379.4 480.2L373.2 491.8M379.4 480.2L399.4 520.3M379.4 480.2L393.6 531M399.4 520.3L393.6 531M394.9 339.1L384.1 375.4M384.1 375.4L391.3 349.9M384.1 375.4L380.3 386.8M384.1 375.4L376.1 413.6M376.1 413.6L380.3 386.8M376.1 413.6L372.3 425.3M376.1 413.6L369.7 452.9M369.7 452.9L372.3 425.3M369.7 452.9L365.7 464.9M369.7 452.9L373.2 491.8M373.2 491.8L365.7 464.9M373.2 491.8L369.3 503.6M373.2 491.8L393.6 531M373.2 491.8L390.1 541.8M393.6 531L390.1 541.8M380.3 386.8L372.3 425.3M372.3 425.3L365.7 464.9M365.7 464.9L370.7 437.2M365.7 464.9L364.1 477.1M365.7 464.9L369.3 503.6M369.3 503.6L364.1 477.1M369.3 503.6L367.7 515.6M369.3 503.6L390.1 541.8M369.3 503.6L388.6 552.8M390.1 541.8L388.6 552.8M364.1 477.1L367.7 515.6M367.7 515.6L365 489.3M367.7 515.6L368.5 527.7M367.7 515.6L388.6 552.8M367.7 515.6L389.4 563.8M388.6 552.8L389.4 563.8M368.5 527.7L389.4 563.8M368.5 527.7L392.3 574.7M389.4 563.8L392.3 574.7M371.7 539.6L392.3 574.7M371.7 539.6L397.4 585.4M392.3 574.7L397.4 585.4M377.3 551.3L397.4 585.4"/>
</g>
<path class="ml" d="M623.2 473.9L623.6 516.9M623.6 516.9L645.2 472.9M623.6 516.9L646.7 515.9M623.6 516.9L623.9 559.9M623.9 559.9L646.7 515.9M623.9 559.9L647.8 558.9M623.9 559.9L624.2 603.2M624.2 603.2L647.8 558.9M624.2 603.2L648.7 602.1M624.2 603.2L624 639.9M624 639.9L648.7 602.1M624 639.9L648.2 638.8M624 639.9L623.2 666.5M624 639.9L645.3 665.6M623.2 666.5L645.3 665.6M623.2 473.9L645.2 472.9M645.2 472.9L646.7 515.9M646.7 515.9L666.8 470.9M646.7 515.9L669.4 513.8M646.7 515.9L647.8 558.9M647.8 558.9L669.4 513.8M647.8 558.9L671.3 556.7M647.8 558.9L648.7 602.1M648.7 602.1L671.3 556.7M648.7 602.1L672.8 599.8M648.7 602.1L648.2 638.8M648.2 638.8L672.8 599.8M648.2 638.8L672 636.6M648.2 638.8L645.3 665.6M648.2 638.8L667.1 663.5M645.3 665.6L667.1 663.5M645.2 472.9L666.8 470.9M666.8 470.9L669.4 513.8M669.4 513.8L688 467.8M669.4 513.8L691.6 510.5M669.4 513.8L671.3 556.7M671.3 556.7L691.6 510.5M671.3 556.7L694.3 553.3M671.3 556.7L672.8 599.8M672.8 599.8L694.3 553.3M672.8 599.8L696.4 596.4M672.8 599.8L672 636.6M672 636.6L696.4 596.4M672 636.6L695.2 633.2M672 636.6L667.1 663.5M672 636.6L688.4 660.4M667.1 663.5L688.4 660.4M666.8 470.9L688 467.8M688 467.8L691.6 510.5M691.6 510.5L708.5 463.8M691.6 510.5L713.1 506.3M691.6 510.5L694.3 553.3M694.3 553.3L713.1 506.3M694.3 553.3L716.5 548.9M694.3 553.3L696.4 596.4M696.4 596.4L716.5 548.9M696.4 596.4L719.2 591.9M696.4 596.4L695.2 633.2M695.2 633.2L719.2 591.9M695.2 633.2L717.7 628.8M695.2 633.2L688.4 660.4M695.2 633.2L709 656.3M688.4 660.4L709 656.3M688 467.8L708.5 463.8M708.5 463.8L713.1 506.3M713.1 506.3L728 458.7M713.1 506.3L733.6 501M713.1 506.3L716.5 548.9M716.5 548.9L733.6 501M716.5 548.9L737.7 543.4M716.5 548.9L719.2 591.9M719.2 591.9L737.7 543.4M719.2 591.9L741 586.3M719.2 591.9L717.7 628.8M717.7 628.8L741 586.3M717.7 628.8L739.2 623.2M717.7 628.8L709 656.3M717.7 628.8L728.7 651.3M709 656.3L728.7 651.3M708.5 463.8L728 458.7M728 458.7L733.6 501M733.6 501L746.5 452.7M733.6 501L753 494.7M733.6 501L737.7 543.4M737.7 543.4L753 494.7M737.7 543.4L757.8 536.9M737.7 543.4L741 586.3M741 586.3L757.8 536.9M741 586.3L761.6 579.6M741 586.3L739.2 623.2M739.2 623.2L761.6 579.6M739.2 623.2L759.5 616.6M739.2 623.2L728.7 651.3M739.2 623.2L747.2 645.3M728.7 651.3L747.2 645.3M728 458.7L746.5 452.7M746.5 452.7L753 494.7M753 494.7L763.7 445.9M753 494.7L771 487.5M753 494.7L757.8 536.9M757.8 536.9L771 487.5M757.8 536.9L776.4 529.5M757.8 536.9L761.6 579.6M761.6 579.6L776.4 529.5M761.6 579.6L780.8 572M761.6 579.6L759.5 616.6M759.5 616.6L780.8 572M759.5 616.6L778.4 609.1M759.5 616.6L747.2 645.3M759.5 616.6L764.5 638.4M747.2 645.3L764.5 638.4M746.5 452.7L763.7 445.9M763.7 445.9L771 487.5M771 487.5L779.4 438.2M771 487.5L787.6 479.5M771 487.5L776.4 529.5M776.4 529.5L787.6 479.5M776.4 529.5L793.5 521.2M776.4 529.5L780.8 572M780.8 572L793.5 521.2M780.8 572L798.4 563.4M780.8 572L778.4 609.1M778.4 609.1L798.4 563.4M778.4 609.1L795.7 600.7M778.4 609.1L764.5 638.4M778.4 609.1L780.4 630.7M764.5 638.4L780.4 630.7M763.7 445.9L779.4 438.2M779.4 438.2L787.6 479.5M787.6 479.5L793.6 429.9M787.6 479.5L802.5 470.7M787.6 479.5L793.5 521.2M793.5 521.2L802.5 470.7M793.5 521.2L808.9 512.1M793.5 521.2L798.4 563.4M798.4 563.4L808.9 512.1M798.4 563.4L814.2 554.1M798.4 563.4L795.7 600.7M795.7 600.7L814.2 554.1M795.7 600.7L811.3 591.5M795.7 600.7L780.4 630.7M795.7 600.7L794.7 622.2M780.4 630.7L794.7 622.2M779.4 438.2L793.6 429.9M793.6 429.9L802.5 470.7M802.5 470.7L806.1 420.8M802.5 470.7L815.5 461.2M802.5 470.7L808.9 512.1M808.9 512.1L815.5 461.2M808.9 512.1L822.4 502.3M808.9 512.1L814.2 554.1M814.2 554.1L822.4 502.3M814.2 554.1L828 544M814.2 554.1L811.3 591.5M811.3 591.5L828 544M811.3 591.5L825 581.6M811.3 591.5L794.7 622.2M811.3 591.5L807.2 613.2M794.7 622.2L807.2 613.2M793.6 429.9L806.1 420.8M806.1 420.8L815.5 461.2M815.5 461.2L816.7 411.2M815.5 461.2L826.7 451.2M815.5 461.2L822.4 502.3M822.4 502.3L826.7 451.2M822.4 502.3L833.9 491.9M822.4 502.3L828 544M828 544L833.9 491.9M828 544L839.9 533.3M828 544L825 581.6M825 581.6L839.9 533.3M825 581.6L836.6 571.1M825 581.6L807.2 613.2M825 581.6L817.8 603.5M807.2 613.2L817.8 603.5M806.1 420.8L816.7 411.2M816.7 411.2L826.7 451.2M826.7 451.2L825.3 401.2M826.7 451.2L835.7 440.6M826.7 451.2L833.9 491.9M833.9 491.9L835.7 440.6M833.9 491.9L843.3 481M833.9 491.9L839.9 533.3M839.9 533.3L843.3 481M839.9 533.3L849.5 522.1M839.9 533.3L836.6 571.1M836.6 571.1L849.5 522.1M836.6 571.1L846.1 560M836.6 571.1L817.8 603.5M836.6 571.1L826.5 593.4M817.8 603.5L826.5 593.4M816.7 411.2L825.3 401.2M825.3 401.2L835.7 440.6M835.7 440.6L832 390.8M835.7 440.6L842.7 429.6M835.7 440.6L843.3 481M843.3 481L842.7 429.6M843.3 481L850.5 469.7M843.3 481L849.5 522.1M849.5 522.1L850.5 469.7M849.5 522.1L856.9 510.5M849.5 522.1L846.1 560M846.1 560L856.9 510.5M846.1 560L853.4 548.5M846.1 560L826.5 593.4M846.1 560L833.2 582.9M826.5 593.4L833.2 582.9M825.3 401.2L832 390.8M832 390.8L842.7 429.6M842.7 429.6L836.5 380.1M842.7 429.6L847.5 418.4M842.7 429.6L850.5 469.7M850.5 469.7L847.5 418.4M850.5 469.7L855.5 458M850.5 469.7L856.9 510.5M856.9 510.5L855.5 458M856.9 510.5L862 498.6M856.9 510.5L853.4 548.5M853.4 548.5L862 498.6M853.4 548.5L858.4 536.8M832 390.8L836.5 380.1M836.5 380.1L847.5 418.4M847.5 418.4L838.9 369.2M847.5 418.4L850 407M847.5 418.4L855.5 458M855.5 458L850 407M855.5 458L858.1 446.2M855.5 458L862 498.6M862 498.6L858.1 446.2M862 498.6L864.6 486.4M862 498.6L858.4 536.8M858.4 536.8L864.6 486.4M858.4 536.8L861.1 524.8M836.5 380.1L838.9 369.2M838.9 369.2L850 407M850 407L839.1 358.2M850 407L850.2 395.5M850 407L858.1 446.2M858.1 446.2L850.2 395.5M858.1 446.2L858.3 434.4M858.1 446.2L864.6 486.4M864.6 486.4L858.3 434.4M864.6 486.4L864.9 474.3M864.6 486.4L861.1 524.8M838.9 369.2L839.1 358.2M839.1 358.2L850.2 395.5M850.2 395.5L837.2 347.3M850.2 395.5L848.2 384.1M850.2 395.5L858.3 434.4M858.3 434.4L848.2 384.1M858.3 434.4L856.2 422.6M858.3 434.4L864.9 474.3M864.9 474.3L856.2 422.6M864.9 474.3L862.8 462.1M839.1 358.2L837.2 347.3M837.2 347.3L848.2 384.1M837.2 347.3L833.1 336.6M833.1 336.6L827 326.1M827 326.1L818.8 315.9M818.8 315.9L808.6 306.2M808.6 306.2L796.5 297.1M796.5 297.1L782.7 288.6M782.7 288.6L767.3 280.7M767.3 280.7L750.4 273.7M750.4 273.7L732.2 267.5M732.2 267.5L712.9 262.3M712.9 262.3L692.6 258M692.6 258L671.6 254.7M671.6 254.7L650 252.4M650 252.4L628.1 251.2M628.1 251.2L606 251.1M606 251.1L584 252.1M584 252.1L562.4 254.1M562.4 254.1L541.2 257.2M541.2 257.2L520.7 261.2M520.7 261.2L501.2 266.3M501.2 266.3L482.7 272.3M482.7 272.3L465.5 279.1M465.5 279.1L449.8 286.8M449.8 286.8L435.6 295.1M435.6 295.1L423.1 304.2M423.1 304.2L412.5 313.8M412.5 313.8L403.9 323.8M403.9 323.8L397.2 334.2M397.2 334.2L392.7 344.9M392.7 344.9L381.7 381.6M381.7 381.6L390.3 355.8M381.7 381.6L379.2 393M373.7 420L379.2 393M373.7 420L371.1 431.8M392.7 344.9L390.3 355.8M390.3 355.8L379.2 393M379.2 393L390.1 366.8M379.2 393L379 404.5M379.2 393L371.1 431.8M371.1 431.8L379 404.5M371.1 431.8L370.9 443.6M371.1 431.8L364.6 471.6M364.6 471.6L370.9 443.6M364.6 471.6L364.3 483.7M390.3 355.8L390.1 366.8M390.1 366.8L379 404.5M379 404.5L392 377.7M379 404.5L381 415.9M379 404.5L370.9 443.6M370.9 443.6L381 415.9M370.9 443.6L373 455.4M370.9 443.6L364.3 483.7M364.3 483.7L373 455.4M364.3 483.7L366.4 495.9M364.3 483.7L367.9 522.2M367.9 522.2L366.4 495.9M367.9 522.2L370 534.2M390.1 366.8L392 377.7M392 377.7L381 415.9M381 415.9L396.1 388.4M381 415.9L385.3 427.2M381 415.9L373 455.4M373 455.4L385.3 427.2M373 455.4L377.4 467.1M373 455.4L366.4 495.9M366.4 495.9L377.4 467.1M366.4 495.9L371 507.9M366.4 495.9L370 534.2M370 534.2L371 507.9M370 534.2L374.5 546M392 377.7L396.1 388.4M396.1 388.4L385.3 427.2M385.3 427.2L402.2 398.9M385.3 427.2L391.7 438.2M385.3 427.2L377.4 467.1M377.4 467.1L391.7 438.2M377.4 467.1L384.1 478.5M377.4 467.1L371 507.9M371 507.9L384.1 478.5M371 507.9L377.8 519.6M371 507.9L374.5 546M374.5 546L377.8 519.6M374.5 546L381.2 557.5M374.5 546L401 591.1M394.8 580.6L401 591.1M396.1 388.4L402.2 398.9M402.2 398.9L391.7 438.2M391.7 438.2L410.4 409.1M391.7 438.2L400.4 448.9M391.7 438.2L384.1 478.5M384.1 478.5L400.4 448.9M384.1 478.5L393 489.5M384.1 478.5L377.8 519.6M377.8 519.6L393 489.5M377.8 519.6L387 530.9M377.8 519.6L381.2 557.5M381.2 557.5L387 530.9M381.2 557.5L390.3 568.7M381.2 557.5L401 591.1M381.2 557.5L409.3 601.3M401 591.1L409.3 601.3M402.2 398.9L410.4 409.1M410.4 409.1L400.4 448.9M400.4 448.9L420.6 418.8M400.4 448.9L411 459M400.4 448.9L393 489.5M393 489.5L411 459M393 489.5L404.1 500.1M393 489.5L387 530.9M387 530.9L404.1 500.1M387 530.9L398.4 541.7M387 530.9L390.3 568.7M390.3 568.7L398.4 541.7M390.3 568.7L401.5 579.3M390.3 568.7L409.3 601.3M390.3 568.7L419.5 611.1M409.3 601.3L419.5 611.1M410.4 409.1L420.6 418.8M420.6 418.8L411 459M411 459L432.7 427.9M411 459L423.7 468.6M411 459L404.1 500.1M404.1 500.1L423.7 468.6M404.1 500.1L417.1 510M404.1 500.1L398.4 541.7M398.4 541.7L417.1 510M398.4 541.7L411.8 551.9M398.4 541.7L401.5 579.3M401.5 579.3L411.8 551.9M401.5 579.3L414.7 589.4M401.5 579.3L419.5 611.1M401.5 579.3L431.6 620.3M419.5 611.1L431.6 620.3M420.6 418.8L432.7 427.9M432.7 427.9L423.7 468.6M423.7 468.6L446.5 436.4M423.7 468.6L438.2 477.6M423.7 468.6L417.1 510M417.1 510L438.2 477.6M417.1 510L432.1 519.3M417.1 510L411.8 551.9M411.8 551.9L432.1 519.3M411.8 551.9L427.2 561.4M411.8 551.9L414.7 589.4M414.7 589.4L427.2 561.4M414.7 589.4L429.9 598.8M414.7 589.4L431.6 620.3M414.7 589.4L445.5 628.9M431.6 620.3L445.5 628.9M432.7 427.9L446.5 436.4M446.5 436.4L438.2 477.6M438.2 477.6L461.9 444.3M438.2 477.6L454.4 485.8M438.2 477.6L432.1 519.3M432.1 519.3L454.4 485.8M432.1 519.3L448.9 527.7M432.1 519.3L427.2 561.4M427.2 561.4L448.9 527.7M427.2 561.4L444.4 570.1M427.2 561.4L429.9 598.8M429.9 598.8L444.4 570.1M429.9 598.8L446.8 607.3M429.9 598.8L445.5 628.9M429.9 598.8L461 636.7M445.5 628.9L461 636.7M446.5 436.4L461.9 444.3M461.9 444.3L454.4 485.8M454.4 485.8L478.8 451.3M454.4 485.8L472.1 493.2M454.4 485.8L448.9 527.7M448.9 527.7L472.1 493.2M448.9 527.7L467.2 535.4M448.9 527.7L444.4 570.1M444.4 570.1L467.2 535.4M444.4 570.1L463.2 578M444.4 570.1L446.8 607.3M446.8 607.3L463.2 578M446.8 607.3L465.4 615.1M446.8 607.3L461 636.7M446.8 607.3L478 643.8M461 636.7L478 643.8M461.9 444.3L478.8 451.3M478.8 451.3L472.1 493.2M472.1 493.2L497 457.5M472.1 493.2L491.2 499.7M472.1 493.2L467.2 535.4M467.2 535.4L491.2 499.7M467.2 535.4L486.9 542.1M467.2 535.4L463.2 578M463.2 578L486.9 542.1M463.2 578L483.5 584.9M463.2 578L465.4 615.1M465.4 615.1L483.5 584.9M465.4 615.1L485.4 621.8M465.4 615.1L478 643.8M465.4 615.1L496.3 650M478 643.8L496.3 650M478.8 451.3L497 457.5M497 457.5L491.2 499.7M491.2 499.7L516.3 462.7M491.2 499.7L511.5 505.2M491.2 499.7L486.9 542.1M486.9 542.1L511.5 505.2M486.9 542.1L507.9 547.8M486.9 542.1L483.5 584.9M483.5 584.9L507.9 547.8M483.5 584.9L505 590.7M483.5 584.9L485.4 621.8M485.4 621.8L505 590.7M485.4 621.8L506.6 627.6M485.4 621.8L496.3 650M485.4 621.8L515.8 655.3M496.3 650L515.8 655.3M497 457.5L516.3 462.7M516.3 462.7L511.5 505.2M511.5 505.2L536.6 467M511.5 505.2L532.8 509.7M511.5 505.2L507.9 547.8M507.9 547.8L532.8 509.7M507.9 547.8L529.9 552.5M507.9 547.8L505 590.7M505 590.7L529.9 552.5M505 590.7L527.7 595.5M505 590.7L506.6 627.6M506.6 627.6L527.7 595.5M506.6 627.6L528.9 632.3M506.6 627.6L515.8 655.3M506.6 627.6L536.2 659.6M515.8 655.3L536.2 659.6M516.3 462.7L536.6 467M536.6 467L532.8 509.7M532.8 509.7L557.6 470.3M532.8 509.7L554.8 513.1M532.8 509.7L529.9 552.5M529.9 552.5L554.8 513.1M529.9 552.5L552.8 556M529.9 552.5L527.7 595.5M527.7 595.5L552.8 556M527.7 595.5L551.1 599.2M527.7 595.5L528.9 632.3M528.9 632.3L551.1 599.2M528.9 632.3L552 636M528.9 632.3L536.2 659.6M528.9 632.3L557.3 662.9M536.2 659.6L557.3 662.9M536.6 467L557.6 470.3M557.6 470.3L554.8 513.1M554.8 513.1L579.2 472.6M554.8 513.1L577.5 515.5M554.8 513.1L552.8 556M552.8 556L577.5 515.5M552.8 556L576.2 558.5M552.8 556L551.1 599.2M551.1 599.2L576.2 558.5M551.1 599.2L575.2 601.7M551.1 599.2L552 636M552 636L575.2 601.7M552 636L575.7 638.4M552 636L557.3 662.9M552 636L579 665.2M557.3 662.9L579 665.2M557.6 470.3L579.2 472.6M579.2 472.6L577.5 515.5M577.5 515.5L601.1 473.8M577.5 515.5L600.5 516.7M577.5 515.5L576.2 558.5M576.2 558.5L600.5 516.7M576.2 558.5L600 559.8M576.2 558.5L575.2 601.7M575.2 601.7L600 559.8M575.2 601.7L599.6 603M575.2 601.7L575.7 638.4M575.7 638.4L599.6 603M575.7 638.4L599.8 639.7M575.7 638.4L579 665.2M575.7 638.4L601.1 666.4M579 665.2L601.1 666.4M579.2 472.6L601.1 473.8M601.1 473.8L600.5 516.7M600.5 516.7L623.2 473.9M600.5 516.7L623.6 516.9M600.5 516.7L600 559.8M600 559.8L623.6 516.9M600 559.8L623.9 559.9M600 559.8L599.6 603M599.6 603L623.9 559.9M599.6 603L624.2 603.2M599.6 603L599.8 639.7M599.8 639.7L624.2 603.2M599.8 639.7L624 639.9M599.8 639.7L601.1 666.4M599.8 639.7L623.2 666.5M601.1 666.4L623.2 666.5M601.1 473.8L623.2 473.9"/>
</svg>
<!-- app icon -->
<svg class="abs" style="left:10px;top:10px" width="16" height="16" viewBox="0 0 16 16"><defs><linearGradient id="ig" x1="0" y1="0" x2="0" y2="1"><stop offset="0" stop-color="#e2414f"/><stop offset="1" stop-color="#ad1727"/></linearGradient></defs><rect width="16" height="15.5" fill="url(#ig)"/><rect x="2.8" y="7.8" width="3.1" height="6" fill="#f3e6e4"/><rect x="10.3" y="3.3" width="2.9" height="10.5" fill="#f6e9e8"/><path d="M6.200 9.200L10 4.500M6.500 4.200L10.200 3.600" stroke="#f1dcd6" stroke-width="1.200" fill="none"/></svg>
<!-- caption buttons -->
<div class="abs" style="left:919px;top:10px;width:28px;height:15px;border:1px solid #8aa3bd;border-radius:3px;background:linear-gradient(#c3d5e9 0,#b5cadf 45%,#a3bcd6 50%,#b3c8de 100%);box-shadow:inset 0 0 0 1px rgba(255,255,255,.35)"><div class="abs" style="left:9px;top:8px;width:9px;height:2px;border:1px solid #6c7f94;border-radius:1px;background:#e8eef5"></div></div>
<div class="abs" style="left:951px;top:10px;width:29px;height:15px;border:1px solid #6f8aa8;border-radius:3px;background:linear-gradient(#c8d9eb 0,#b9cde3 45%,#9db8d4 50%,#b4c9df 100%);box-shadow:inset 0 0 0 1px rgba(255,255,255,.4)"><div class="abs" style="left:10px;top:4px;width:5px;height:3px;border:2px solid #f4f7fb;outline:1px solid #5b6e84;background:#7c8ea6"></div></div>
<div class="abs" style="left:984px;top:10px;width:28px;height:15px;border:1px solid #7d3a33;border-radius:3px;background:linear-gradient(#e4a59c 0,#d77c6d 45%,#c4432c 50%,#d1573f 100%);box-shadow:inset 0 0 0 1px rgba(255,255,255,.3)"><svg class="abs" style="left:8px;top:2px" width="12" height="11" viewBox="0 0 12 11"><path d="M3.200 3L8.800 8M8.800 3L3.200 8" stroke="#6b2b24" stroke-width="3.400" stroke-linecap="square"/><path d="M3.200 3L8.800 8M8.800 3L3.200 8" stroke="#fff" stroke-width="1.900" stroke-linecap="square"/></svg></div>
<!-- MDI buttons -->
<div class="abs mdi" style="left:967px"><div class="abs" style="left:4px;top:9px;width:6px;height:2px;background:#5a6a7c"></div></div>
<div class="abs mdi" style="left:983px"><svg class="abs" style="left:2px;top:2px" width="10" height="10" viewBox="0 0 10 10"><path d="M3.5 3V1.5H8.5V6H7M1.5 4.5H6.5V8.5H1.5Z" fill="none" stroke="#6a7888" stroke-width="1"/><path d="M3.5 2H8.5M1.5 5H6.5" stroke="#6a7888" stroke-width="1.2"/></svg></div>
<div class="abs mdi" style="left:999px"><svg class="abs" style="left:2px;top:2px" width="10" height="10" viewBox="0 0 10 10"><path d="M1.8 1.8L8.2 8.2M8.2 1.8L1.8 8.2" stroke="#5a6878" stroke-width="1.7"/></svg></div>
<!-- help icon -->
<svg class="abs" style="left:996px;top:52px" width="17" height="17" viewBox="0 0 17 17"><defs><radialGradient id="hg" cx=".4" cy=".3" r=".8"><stop offset="0" stop-color="#5b86f0"/><stop offset=".6" stop-color="#1f3fc0"/><stop offset="1" stop-color="#12247c"/></radialGradient></defs><circle cx="8.5" cy="8.8" r="7.4" fill="#fdfdfd" stroke="#9aa0ac" stroke-width=".8"/><circle cx="8.3" cy="8.3" r="6" fill="url(#hg)"/><text x="8.3" y="12" font-family="Liberation Sans,sans-serif" font-weight="bold" font-size="10.5" fill="#fff" text-anchor="middle">?</text></svg>
<!-- toolbar -->
<svg class="abs" style="left:8px;top:48px" width="240" height="28" viewBox="8 48 240 28">
<!-- exit door -->
<rect x="17.5" y="55.5" width="6.5" height="11" fill="#fff" stroke="#222" stroke-width="1"/><path d="M13 55L19 57V69.5L13 66Z" fill="#8a8d2e" stroke="#4a4c14" stroke-width=".8"/><path d="M29.500 60.500H25.500M26.500 58L23.500 60.500L26.500 63Z" fill="#1a22c8" stroke="#1a22c8" stroke-width="1.400"/><path d="M20 67H26" stroke="#222"/>
<path d="M36.5 52V73" stroke="#c4c4c4"/><path d="M37.5 52V73" stroke="#fff"/>
<!-- R zoom -->
<path d="M46 67L47.5 57.5C51 53.5 57.5 53.5 57 57.5C56.5 60.5 51 61.5 49 60.5" fill="none" stroke="#1c2cc8" stroke-width="2.4"/><path d="M44 60C44 55 49 53 52 54.5" fill="none" stroke="#3f63d8" stroke-width="1.6"/><path d="M43 64.5H50L46.5 69.5Z" fill="#1c2cc8"/><path d="M51.5 61.5L57.5 68.5" stroke="#111" stroke-width="2.2"/>
<!-- zoom extents -->
<circle cx="74.600" cy="61.200" r="6.700" fill="#fff" stroke="#111" stroke-width="1.250"/><path d="M79.5 66L83 69.8" stroke="#111" stroke-width="2.4"/><path d="M74.6 55.8L76.6 58.6H72.6ZM74.6 66.6L76.6 63.8H72.6ZM69.2 61.2L72 59.2V63.2ZM80 61.2L77.2 59.2V63.2Z" fill="#1a22c8"/><path d="M74.6 58V64.4M71.4 61.2H77.8" stroke="#1a22c8" stroke-width="1"/>
<!-- gray x2 -->
<circle cx="97.6" cy="60.4" r="6.4" fill="#f4f4f4" stroke="#c2c2c2" stroke-width="1.3"/><path d="M102.5 65.5L105.5 69" stroke="#c2c2c2" stroke-width="2"/><text x="93.3" y="63.6" font-family="Liberation Sans,sans-serif" font-size="8" fill="#c4c4c4">x2</text>
<!-- pencil -->
<path d="M118.5 63.5L127.5 54.5L130 56.5L121 65.5Z" fill="#f2ea70" stroke="#8a8420" stroke-width=".6"/><path d="M127.5 54.5L129 53.2L131.3 55.2L130 56.5Z" fill="#e0403c"/><path d="M118.5 63.5L117.5 66.5L121 65.5Z" fill="#333"/><path d="M114 65.5C117 67.5 119 64.5 122 66.5L130 69.5M121 66L129 62.5" fill="none" stroke="#333" stroke-width="1"/>
<!-- zoom window -->
<circle cx="144.300" cy="58.600" r="5.400" fill="#eef6ff" stroke="#2a3340" stroke-width="1.100"/><path d="M140 57.5C142 55 146 55 148 57" stroke="#5aa0e0" fill="none"/><path d="M148 62.5L153 68.3" stroke="#111" stroke-width="2.2"/><rect x="138.3" y="60" width="8.5" height="9" fill="none" stroke="#2a34c8" stroke-width="1" stroke-dasharray="1 1"/>
<!-- hand -->
<path d="M165 69V66L162.5 62.5C162 61.3 163.5 60.8 164.3 61.8L165.8 63.5V57.5C165.8 56.2 167.6 56.2 167.6 57.5V56C167.6 54.8 169.6 54.8 169.6 56V56.6C169.6 55.4 171.6 55.4 171.6 56.6V58C171.6 57 173.4 57 173.4 58.2V65L172.4 69Z" fill="#fff" stroke="#111" stroke-width="1"/><path d="M167.6 57.5V62M169.6 56.5V62M171.6 58V62" stroke="#111" stroke-width=".8"/>
<!-- window icon -->
<rect x="185.3" y="54.3" width="13.5" height="10.5" fill="#fff" stroke="#2a58c0" stroke-width="1.2"/><rect x="186" y="55" width="12.2" height="3" fill="#3fd0d8"/><rect x="193.3" y="59.3" width="7.5" height="9.7" fill="#fff" stroke="#222" stroke-width="1"/><path d="M195 62H199.500M195 64.500H199.500M195 67H199.500" stroke="#777" stroke-width=".7"/><path d="M191.5 61C188 61 186.5 64.5 189 67.5" fill="none" stroke="#1a2cc8" stroke-width="2"/><path d="M187.5 66L192 69.5L192 65.5Z" fill="#1a2cc8"/>
<path d="M208.5 52V73" stroke="#c4c4c4"/><path d="M209.5 52V73" stroke="#fff"/>
<!-- binoculars -->
<path d="M217.8 55.8H220.400V57.500L221.800 60.500V67.300H215.600V62.500L217.800 57.500ZM225.600 55.800H228.200V57.500L230.400 62.500V67.300H224.200V60.500L225.600 57.500Z" fill="#141414"/><rect x="221.500" y="59.800" width="3" height="3.400" fill="#141414"/><path d="M218.700 57.800V62M227.300 57.800V62" stroke="#8a8a8a" stroke-width=".7"/><path d="M215.600 64.500H221.800M224.200 64.500H230.400" stroke="#555" stroke-width=".6"/>
</svg>
<!-- horizontal scrollbar -->
<div class="abs" style="left:26px;top:77px;width:966px;height:17px;background:linear-gradient(#e3e3e3,#efefef 40%,#f3f3f3)"></div>
<div class="abs" style="left:30px;top:82px;width:0;height:0;border-top:3.5px solid transparent;border-bottom:3.5px solid transparent;border-right:4px solid #444"></div>
<div class="abs" style="left:983px;top:82px;width:0;height:0;border-top:3.5px solid transparent;border-bottom:3.5px solid transparent;border-left:4px solid #333"></div>
<div class="abs" style="left:626px;top:79px;width:42px;height:12px;border:1px solid #979797;border-radius:2px;background:linear-gradient(#f4f4f4,#e6e6e6 45%,#d4d4d4 55%,#dcdcdc)"><div class="abs" style="left:18px;top:3px;width:1px;height:6px;background:#555;box-shadow:2px 0 0 #555,4px 0 0 #555"></div></div>
<!-- left sidebar -->
<svg class="abs" style="left:8px;top:77px" width="18" height="90" viewBox="8 77 18 90">
<rect x="10.700" y="79.700" width="13.800" height="13" rx="2" fill="#f6f4fc" stroke="#a2a2a2"/><path d="M13.600 85C12.800 91.800 21.800 92.200 21.300 84.500" fill="none" stroke="#1a1a98" stroke-width="2.300"/><path d="M16.700 81.700H22.300L21.800 85L19 86.800H16.700Z" fill="#0a0a14"/>
<path d="M10.500 100.500H20V109.500H10.500Z" fill="#f4e6a0" stroke="#111"/><path d="M10.500 100.500L14 96.500H24L20 100.500Z" fill="#f0c8a8" stroke="#111"/><path d="M20 100.500L24 96.500V105.500L20 109.500Z" fill="#666" stroke="#111"/>
<rect x="10.500" y="112.500" width="14" height="14.500" rx="2.500" fill="#f4f4f8" stroke="#b4b4b8"/><path d="M14 116.500H20V122.500H14Z" fill="#f0c2b0" stroke="#111"/><path d="M14 116.500L16.500 113.500H23L20 116.500Z" fill="#f8e4da" stroke="#111"/><path d="M20 116.500L23 113.500V119.500L20 122.500Z" fill="#c89880" stroke="#111"/><path d="M12 118C10 121 11.500 124.700 16 124.700" fill="none" stroke="#2030c8" stroke-width="1.500"/><path d="M15.500 122.500L19 124.800L15.500 127Z" fill="#2030c8"/><path d="M19 124.800C22 124.800 24 122.500 23.500 120.500" fill="none" stroke="#b8bce8" stroke-width="1.300"/>
<rect x="10.500" y="129.500" width="14" height="15" rx="1.500" fill="#f4f4f4" stroke="#c4c4c4"/><path d="M13.300 132.500L17 129.500L19 130.500V144L15.500 143L13.300 140Z" fill="#9ad82e"/><path d="M19 130.500L23.700 134V141.500L19 144Z" fill="#1f8f14"/><path d="M13.300 132.500L17 129.500L19 130.500L23.700 134V141.500L19 144L15.500 143L13.300 140Z" fill="none" stroke="#14540c" stroke-width=".8"/><path d="M15 134L17.500 136V141" fill="none" stroke="#d8f060" stroke-width=".8"/>
<rect x="10.500" y="146.500" width="14" height="13.500" rx="1.500" fill="#e6e6e6" stroke="#c0c0c0"/><path d="M14.500 155L17.500 152L20.500 155Z" fill="#555"/>
</svg>
<div class="abs" style="left:10px;top:343px;width:13px;height:24px;border:1px solid #6f93ad;border-radius:2px;background:linear-gradient(90deg,#dcf1fb,#c2e6f7 45%,#a5dbf3 50%,#b6e2f6)"><div class="abs" style="left:4px;top:9px;width:6px;height:1px;background:#2c6a88;box-shadow:0 3px 0 #2c6a88,0 6px 0 #2c6a88"></div></div>
<div class="abs" style="left:10px;top:714px;width:13px;height:14px;border:1px solid #b0b0b0;border-radius:2px;background:linear-gradient(#f6f6f6,#dadada)"><div class="abs" style="left:3.500px;top:6px;width:0;height:0;border-left:3px solid transparent;border-right:3px solid transparent;border-top:3px solid #444"></div></div>
<!-- axes -->
<svg class="abs" style="left:70px;top:645px" width="60" height="60" viewBox="70 645 60 60">
<path d="M86 688V669" stroke="#3a9a44" stroke-width="2.600"/><path d="M86 663L82.200 670H89.800Z" fill="#2fa53c"/>
<path d="M86 688L104 680" stroke="#1c1cc0" stroke-width="2.200"/><path d="M111 677.500L102.500 677.500L105 682.800Z" fill="#1818e0"/>
<path d="M86 688L103 695" stroke="#d02020" stroke-width="2.200"/><path d="M110.500 698.400L106.300 693L101.800 697.800Z" fill="#e01818"/>
<circle cx="85.600" cy="688.200" r="2.900" fill="#b4b4b4" stroke="#9a9a9a" stroke-width=".6"/>
<text x="86" y="662" font-family="Liberation Sans,sans-serif" font-size="10" fill="#4cb058">Z</text>
<text x="112.800" y="677.600" font-family="Liberation Sans,sans-serif" font-size="9.5" fill="#2a2ab4">Y</text>
<text x="113.300" y="699.200" font-family="Liberation Sans,sans-serif" font-size="9.5" fill="#e02020">X</text>
</svg>

<div id="cbar" class="abs"></div><div id="grad" class="abs"></div>
<div class="abs cl" style="left:100.0px">0.04</div>
<div class="abs cl" style="left:177.2px">0.05</div>
<div class="abs cl" style="left:254.4px;color:#8df08d;opacity:.7">0.05</div>
<div class="abs cl" style="left:331.6px">0.06</div>
<div class="abs cl" style="left:408.8px">0.06</div>
<div class="abs cl" style="left:486.0px">0.07</div>
<div class="abs cl" style="left:563.2px">0.07</div>
<div class="abs cl" style="left:640.4px">0.08</div>
<div class="abs cl" style="left:717.6px">0.08</div>
<div class="abs cl" style="left:794.8px">0.09</div>
<div class="abs cl" style="left:872.0px">0.09</div>
<div class="abs cl" style="left:911px">mm</div>
<div id="status" class="abs">Select an option from the menu.</div>
<div id="dlg" class="abs">
<div id="dlgt" class="abs"></div>
<svg class="abs" style="left:4px;top:4px" width="16" height="16" viewBox="0 0 16 16"><rect width="16" height="15.5" fill="url(#ig)"/><rect x="2.8" y="7.8" width="3.1" height="6" fill="#f3e6e4"/><rect x="10.3" y="3.300" width="2.900" height="10.500" fill="#f6e9e8"/><path d="M6.200 9.200L10 4.500M6.500 4.200L10.200 3.600" stroke="#f1dcd6" stroke-width="1.200" fill="none"/></svg>
<div class="abs" style="left:24px;top:5px;font-size:12.2px;line-height:15px;color:#0a0a14;letter-spacing:-.2px">Options</div>
<div class="abs" style="left:295px;top:4px;width:28px;height:14px;border:1px solid #7d3a33;border-radius:3px;background:linear-gradient(#e4a59c 0,#d77c6d 45%,#c4432c 50%,#d1573f 100%);box-shadow:inset 0 0 0 1px rgba(255,255,255,.3)"><svg class="abs" style="left:9px;top:2px" width="11" height="10" viewBox="0 0 11 10"><path d="M3.200 2.800L7.800 7.200M7.800 2.800L3.200 7.200" stroke="#7b3b34" stroke-width="3.400" stroke-linecap="square"/><path d="M3.200 2.800L7.800 7.200M7.800 2.800L3.200 7.200" stroke="#fff" stroke-width="2" stroke-linecap="square"/></svg></div>
<svg class="abs" style="left:307px;top:26px" width="17" height="17" viewBox="0 0 17 17"><circle cx="8.500" cy="8.800" r="7.200" fill="#fdfdfd" stroke="#9aa0ac" stroke-width=".8"/><circle cx="8.300" cy="8.300" r="5.800" fill="url(#hg)"/><text x="8.300" y="12" font-family="Liberation Sans,sans-serif" font-weight="bold" font-size="10" fill="#fff" text-anchor="middle">?</text></svg>
<div class="abs chk" style="left:5px;top:28px"></div>
<div class="abs dt" style="left:20px;top:28px">View the structure</div>
<div class="abs dt" style="left:5px;top:51px">Scale factor for displacements</div>
<div class="abs" style="left:151px;top:49px;width:52px;height:18px;background:#fff"></div>
<div class="abs dt" style="left:151px;top:51px;width:49px;text-align:right;color:#222">10000.0</div>
<svg class="abs" style="left:209px;top:51px" width="17" height="15" viewBox="0 0 17 15"><rect x=".5" y=".5" width="16" height="14" fill="#111"/><rect x="3" y="3" width="11" height="9" fill="#fff"/><path d="M1 2H16M1 13H16" stroke="#fff" stroke-width="1.200" stroke-dasharray="1.500 1.500"/><path d="M5.500 4.500H9V10.500H5.500M10 4.500V10.500M11.500 5L12.500 10" stroke="#b02020" stroke-width="1" fill="none"/></svg>
<div class="abs band" style="left:0;top:77px"></div>
<div class="abs db" style="left:5px;top:78px;font-size:11.500px">Results</div>
<div class="abs radio" style="left:4px;top:97px"></div>
<div class="abs dt" style="left:20px;top:97px">Deformed Shape</div>
<div class="abs radio on" style="left:4px;top:118px"></div>
<div class="abs db" style="left:20px;top:118px">Contour maps</div>
<div class="abs" style="left:0;top:137px;width:305px;height:1px;background:#c4c4c4"></div>
<div class="abs radio on" style="left:4px;top:143px"></div>
<div class="abs db" style="left:20px;top:142px;font-size:11.500px">Displacements</div>
<div class="abs combo" style="left:112px;top:141px;width:188px"><span class="dt">Total displacement</span><i></i></div>
<div class="abs radio" style="left:4px;top:165px"></div>
<div class="abs dt" style="left:20px;top:165px">Forces</div>
<div class="abs radio" style="left:4px;top:186px"></div>
<div class="abs dt" style="left:20px;top:186px">Stresses</div>
<div class="abs chk" style="left:5px;top:208px"><svg class="abs" style="left:1px;top:1px" width="10" height="10" viewBox="0 0 10 10"><path d="M1.800 4.800L4.200 8.300L8.300 1.500" fill="none" stroke="#3a3a9c" stroke-width="1.500"/></svg></div>
<div class="abs dt" style="left:20px;top:208px">Discretisation</div>
<div class="abs band" style="left:0;top:231px"></div>
<div class="abs db" style="left:5px;top:232px;font-size:11.500px">Selected comb.</div>
<div class="abs combo" style="left:5px;top:249px;width:295px"><span class="dt">Simple loadcase</span><i></i></div>
<div class="abs combo" style="left:5px;top:275px;width:295px"><span class="dt">Q 1</span><i></i></div>
</div>

</body></html>
